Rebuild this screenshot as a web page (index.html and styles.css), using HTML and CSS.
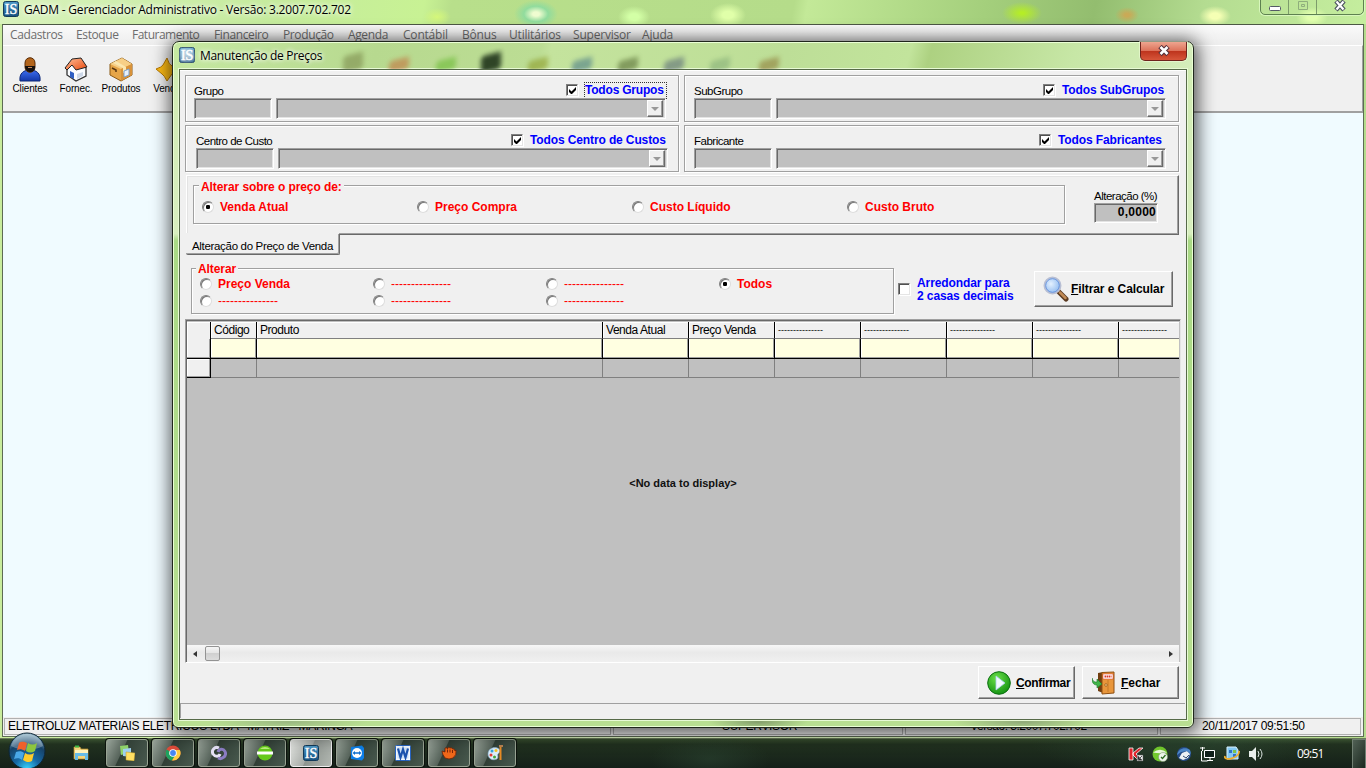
FILE: index.html
```html
<!DOCTYPE html>
<html lang="pt-BR">
<head>
<meta charset="utf-8">
<title>GADM - Gerenciador Administrativo</title>
<link rel="stylesheet" href="styles.css">
</head>
<body>
<svg width="0" height="0" class="defs">
  <defs>
    <linearGradient id="gBlue" x1="0" y1="0" x2="0" y2="1"><stop offset="0" stop-color="#4d9ac9"/><stop offset="1" stop-color="#17517f"/></linearGradient>
    <linearGradient id="gShirt" x1="0" y1="0" x2="0" y2="1"><stop offset="0" stop-color="#3d6ff0"/><stop offset="1" stop-color="#1337a8"/></linearGradient>
    <linearGradient id="gRoof" x1="0" y1="0" x2="1" y2="1"><stop offset="0" stop-color="#ffc09a"/><stop offset="1" stop-color="#e84a10"/></linearGradient>
    <radialGradient id="gGreen" cx=".4" cy=".3" r=".8"><stop offset="0" stop-color="#6be04a"/><stop offset="1" stop-color="#0a8a0c"/></radialGradient>
    <radialGradient id="gLens" cx=".4" cy=".4" r=".7"><stop offset="0" stop-color="#e4f1ff"/><stop offset="1" stop-color="#86b4ee"/></radialGradient>
    <radialGradient id="gOrb" cx=".5" cy="1" r="1"><stop offset="0" stop-color="#37d6ff"/><stop offset=".35" stop-color="#1769a5"/><stop offset=".7" stop-color="#164268"/><stop offset="1" stop-color="#9cc0d0"/></radialGradient>
    <symbol id="is" viewBox="0 0 16 16"><rect x=".5" y=".5" width="15" height="15" rx="2" fill="url(#gBlue)" stroke="#123a59"/><text x="8" y="13" text-anchor="middle" font-family="Liberation Serif, serif" font-size="15" textLength="12.500" lengthAdjust="spacingAndGlyphs" fill="#fff" stroke="#fff" stroke-width=".4">IS</text></symbol>
    <symbol id="tick" viewBox="0 0 9 9"><path d="M1 3v3l2 2h1l4-4V1L3.500 5.500z" fill="#000"/></symbol>
  </defs>
</svg>
<div class="screen">
  <div class="app">
    <div class="app-title">
      <svg class="ic16"><use href="#is"/></svg>
      <span class="app-caption">GADM - Gerenciador Administrativo - Versão: 3.2007.702.702</span>
      <div class="win-buttons">
        <span class="wb"><svg width="14" height="14"><rect x="1.500" y="6.500" width="11" height="4" rx="1" fill="#fff" stroke="#555a66"/></svg></span>
        <span class="wb"><svg width="14" height="14"><path d="M2.500 1.500h9v8h-9zM5.500 4.500h3v2h-3z" fill="none" stroke="#8fae7c"/></svg></span>
        <span class="wb wide"><svg width="14" height="14"><path d="M3 1l8 9M11 1l-8 9" stroke="#4c5260" stroke-width="4.500"/><path d="M3.500 1.500l7 8M10.500 1.500l-7 8" stroke="#fff" stroke-width="2.200"/></svg></span>
      </div>
    </div>
    <div class="app-frame">
      <div class="menubar"><span>Cadastros</span><span>Estoque</span><span>Faturamento</span><span>Financeiro</span><span>Produção</span><span>Agenda</span><span>Contábil</span><span>Bônus</span><span>Utilitários</span><span>Supervisor</span><span>Ajuda</span></div>
      <div class="toolbar">
        <div class="tool"><svg width="24" height="25" viewBox="0 0 24 25"><path d="M2 24c-1-8 4-11 10-11s11 3 10 11z" fill="url(#gShirt)" stroke="#0d2878"/><path d="M7 6c0-7 10-7 10 0v4c0 7-10 7-10 0z" fill="#b3651c" stroke="#5a2d08"/><path d="M7 9h10c1 8-10 8-10 0z" fill="#16110e"/><path d="M10 10h4v1h-4z" fill="#c98b5c"/></svg><span>Clientes</span></div>
        <div class="tool"><svg width="24" height="25" viewBox="0 0 24 25"><path d="M3 11l9-8 10 8v8l-10 5-9-6z" fill="#fafcff" stroke="#333" stroke-width="1.300"/><path d="M1 11L8 2l9-1 6 9-11 3-4-5-5 5z" fill="url(#gRoof)" stroke="#222"/><path d="M6 14l4 2v6l-4-2z" fill="#2f5fc4"/><path d="M13 17l6-2v4l-6 3z" fill="#cdd8e8"/></svg><span>Fornec.</span></div>
        <div class="tool"><svg width="24" height="25" viewBox="0 0 24 25"><path d="M1 7l12-6 10 6v11l-11 6-11-6z" fill="#e6a548" stroke="#8b5a17"/><path d="M1 7l12-6 10 6-11 5z" fill="#f7cf86"/><path d="M12 12v12l11-6V7z" fill="#d8923a"/><path d="M7 4l10 6v5l-3 1v-5L4 6z" fill="#fbe6ae"/><path d="M15 14l5-2v6l-5 2z" fill="#e9f0fa" stroke="#7aa0d0"/><path d="M3 11l4 2v2" fill="none" stroke="#5a3710" stroke-width="1.500"/></svg><span>Produtos</span></div>
        <div class="tool"><svg width="24" height="25" viewBox="0 0 24 25"><path d="M12 1q2 7 5 8l7 3q-6 3-7 5l-5 7q-3-6-5-7l-6-5q6-2 7-4z" fill="#fdbb14" stroke="#b87900" stroke-linejoin="round"/></svg><span>Venda</span></div>
      </div>
      <div class="workspace"></div>
      <div class="app-status"><span>ELETROLUZ MATERIAIS ELETRICOS LTDA - MATRIZ - MARINGA</span><span class="mid">SUPERVISOR</span><span class="mid ver">Versão: 3.2007.702.702</span><span class="date">20/11/2017 09:51:50</span></div>
    </div>
  </div>

  <div class="taskbar">
    <svg class="orb" width="40" height="37" viewBox="0 0 40 37"><circle cx="20" cy="19" r="18" fill="url(#gOrb)" stroke="#0d2535"/><path d="M4 14C9-2 31-2 36 14c-9 5-22 5-32 0z" fill="#fff" opacity=".27"/><path d="M12 11c3-2 5-1 8 0l-2 8c-3-2-5-2-8-1z" fill="#f0602c"/><path d="M21 11c3 2 6 2 9 0l-2 8c-3 2-6 2-9 0z" fill="#8dc63e"/><path d="M9 20c3-1 6-1 8 1l-2 7c-2-2-5-2-8-1z" fill="#4aa8e8"/><path d="M18 21c3 2 6 2 9 0l-2 8c-3 2-6 1-9-1z" fill="#ffcb2b"/></svg>
    <div class="tasks">
      <span class="task bare"><svg class="ic16"><path d="M1 2h6l1 2h7v10H1z" fill="#f5d57c" stroke="#b99335" stroke-width=".7"/><path d="M2 5h13v4H2z" fill="#fff2ba"/><path d="M2 8h13v7h-3v-4H5v4H2z" fill="#67bce8"/><path d="M2 1.500h4" stroke="#3fb944" stroke-width="2"/></svg></span>
      <span class="task"><svg class="ic16"><path d="M1 1l8-1 1 8-8 2z" fill="#8fd36a"/><path d="M4 4l8-1v9l-8-1z" fill="#9ed0ef"/><path d="M7 7l9 1-1 8-8-1z" fill="#ffdf62" stroke="#b5952c" stroke-width=".5"/></svg></span>
      <span class="task"><svg class="ic16"><circle cx="8" cy="8" r="7.500" fill="#dd4b39"/><path d="M8 8L1.500 4.500A7.500 7.500 0 0 0 7 15.500l4-6z" fill="#1da25e"/><path d="M8 5h6.900A7.500 7.500 0 0 1 7 15.500L11 9z" fill="#ffcd41"/><circle cx="8" cy="8" r="3.800" fill="#fff"/><circle cx="8" cy="8" r="2.900" fill="#4687f4"/></svg></span>
      <span class="task"><svg class="ic16"><path d="M8 3C4 1 0 5 2 9c2 3 6 3 7 0" fill="none" stroke="#e6e2f7" stroke-width="3"/><path d="M7 13c4 2 9-2 7-6.500C12 3 8 4 7 7" fill="none" stroke="#8c7dc4" stroke-width="3"/></svg></span>
      <span class="task"><svg class="ic16"><circle cx="8" cy="8" r="7.500" fill="#65c91c"/><path d="M3 4a7 7 0 0 1 10 0z" fill="#b9ef7b"/><path d="M0 6.500h16v3H0z" fill="#fff"/></svg></span>
      <span class="task active"><svg class="ic16"><use href="#is"/></svg></span>
      <span class="task"><svg class="ic16"><path d="M2 2l11-1.500L15 3v10l-2 2.500L2 14z" fill="#0d7fe8"/><circle cx="8" cy="8" r="5" fill="#fff"/><path d="M3.500 8L6 6v1.200h4V6l2.500 2L10 10V8.800H6V10z" fill="#0d6fd0"/></svg></span>
      <span class="task"><svg class="ic16"><rect x=".5" y=".5" width="15" height="15" rx="1" fill="#f4f9ff" stroke="#2864c0"/><rect x="2.500" y="2.500" width="11" height="11" fill="#cde0f6"/><path d="M3 3.500l2.500 9 2.500-8 2.500 8 2.500-9" fill="none" stroke="#1b52ae" stroke-width="2.200"/></svg></span>
      <span class="task"><svg class="ic16"><path d="M1 6l3 1 0-4q2-1 2.500 1Q7 1 9 3q2-1 2.500 1 2-1 2.500 2l1-1q1 5-3 8l-4 1-4-1Q1 9 1 6z" fill="#f0681a" stroke="#6f2207" stroke-width=".8"/><path d="M6.500 4.500v3M9 4.500v3M11.500 5v3" stroke="#7d2408"/></svg></span>
      <span class="task"><svg class="ic16"><path d="M1 9C1 3 8 1 12 4c2 2 0 4-1 5s1 3-1 5C6 16 1 14 1 9z" fill="#dbeefa" stroke="#7fa8c8" stroke-width=".6"/><circle cx="5" cy="6" r="1.500" fill="#35a3e0"/><circle cx="9" cy="5.500" r="1.500" fill="#f3c327"/><circle cx="4" cy="10" r="1.500" fill="#e23b35"/><circle cx="7.500" cy="12" r="1.500" fill="#42a63a"/><path d="M13.500 1v14" stroke="#e88b24" stroke-width="2"/><path d="M12 1h4" stroke="#b98454" stroke-width="2"/></svg></span>
    </div>
    <div class="tray">
      <svg class="ic16"><path d="M1 2h4v12H1zM5 7l6-5h4l-7 6 7 6h-5L5 9z" fill="#e3262d" stroke="#fff" stroke-width=".8"/><path d="M9 9h6v6H9z" fill="#ececec" stroke="#555" stroke-width=".5"/><path d="M10 14l4-4M10 10v4h4" stroke="#555"/></svg>
      <svg class="ic16"><circle cx="8" cy="8" r="7.500" fill="#72c92d"/><path d="M1 6.500Q8 1 15 6.500 8 8 1 6.500z" fill="#e8f9d8"/><circle cx="11" cy="11" r="4.500" fill="#edf5ea" stroke="#809870" stroke-width=".6"/><path d="M9 11l1.500 1.500L13.500 9" fill="none" stroke="#2d6b20" stroke-width="1.300"/></svg>
      <svg class="ic16"><circle cx="8" cy="8" r="7" fill="#264c88"/><path d="M3 12l3-5 5-2 3 3-2 4-5 2z" fill="#eef1f5"/><path d="M1 9C2 3 9 0 14 4l1 4-4-3-6 1z" fill="#4c87ca"/><path d="M7 10l3 2 3-3" fill="none" stroke="#334b70"/></svg>
      <svg class="ic16"><path d="M4.500 4.500h10v7h-10z" fill="#10201a" stroke="#fff"/><path d="M2.500 1v4M0 2h5M1.500 5v10h6M7 14.500h6M10 12v2" fill="none" stroke="#fff"/></svg>
      <svg class="ic16"><path d="M3 1h9l2 3v9H3z" fill="#84c9f3" stroke="#d9f2ff"/><path d="M5 4h3v3H5zM9 8h3v3H9z" fill="#2d72cb"/><path d="M9 4h3v3H9z" fill="#7bc44b"/><path d="M1 10C-1 16 16 12 15 5" fill="none" stroke="#eeae2e" stroke-width="1.800"/></svg>
      <svg class="ic16"><path d="M1 5h3l4-4v14l-4-4H1z" fill="#e9efec"/><path d="M10 5q2 3 0 6M12 3q4 5 0 10" fill="none" stroke="#dce5e1"/></svg>
    </div>
    <span class="clock">09:51</span>
    <span class="show-desktop"></span>
  </div>

  <div class="dialog">
    <div class="dlg-title">
      <svg class="ic16"><use href="#is"/></svg>
      <span>Manutenção de Preços</span>
      <div class="blobs"><i class="b1"></i><i class="b2"></i><i class="b3"></i><i class="b4"></i><i class="b5"></i><i class="b6"></i><i class="b7"></i><i class="b8"></i><i class="b9"></i><i class="b10"></i></div>
      <div class="dlg-close"><svg width="14" height="12"><path d="M3 1.500l8 8M11 1.500l-8 8" stroke="#53303a" stroke-width="4.800"/><path d="M3.500 2l7 7M10.500 2l-7 7" stroke="#fff" stroke-width="2.600"/></svg></div>
    </div>
    <div class="client">
      <div class="filters">
        <div class="fbox">
          <div class="fhead"><span class="lbl">Grupo</span><span class="chk"><svg width="9" height="9"><use href="#tick"/></svg></span><span class="bold blue focus w80">Todos Grupos</span></div>
          <div class="frow"><div class="field code"></div><div class="field combo"><span class="drop"></span></div></div>
        </div>
        <div class="fbox right">
          <div class="fhead"><span class="lbl">SubGrupo</span><span class="chk"><svg width="9" height="9"><use href="#tick"/></svg></span><span class="bold blue w101">Todos SubGrupos</span></div>
          <div class="frow"><div class="field code"></div><div class="field combo"><span class="drop"></span></div></div>
        </div>
        <div class="fbox second">
          <div class="fhead"><span class="lbl">Centro de Custo</span><span class="chk"><svg width="9" height="9"><use href="#tick"/></svg></span><span class="bold blue w136">Todos Centro de Custos</span></div>
          <div class="frow"><div class="field code"></div><div class="field combo"><span class="drop"></span></div></div>
        </div>
        <div class="fbox right">
          <div class="fhead"><span class="lbl">Fabricante</span><span class="chk"><svg width="9" height="9"><use href="#tick"/></svg></span><span class="bold blue w105">Todos Fabricantes</span></div>
          <div class="frow"><div class="field code"></div><div class="field combo"><span class="drop"></span></div></div>
        </div>
      </div>

      <div class="page">
        <div class="group base">
          <span class="legend bold red">Alterar sobre o preço de:</span>
          <span class="opt"><i class="radio on"></i><b>Venda Atual</b></span><span class="opt"><i class="radio"></i><b>Preço Compra</b></span><span class="opt"><i class="radio"></i><b>Custo Líquido</b></span><span class="opt"><i class="radio"></i><b>Custo Bruto</b></span>
        </div>
        <div class="percent"><span class="lbl">Alteração (%)</span><div class="field bold value">0,0000</div></div>
      </div>
      <div class="tab lbl">Alteração do Preço de Venda</div>

      <div class="options">
        <div class="group change">
          <span class="legend bold red">Alterar</span>
          <span class="opt"><i class="radio"></i><b>Preço Venda</b></span><span class="opt"><i class="radio"></i><span>---------------</span></span><span class="opt"><i class="radio"></i><span>---------------</span></span><span class="opt"><i class="radio on"></i><b>Todos</b></span>
          <span class="opt"><i class="radio"></i><span>---------------</span></span><span class="opt"><i class="radio"></i><span>---------------</span></span><span class="opt"><i class="radio"></i><span>---------------</span></span>
        </div>
        <span class="chk round"></span>
        <div class="bold blue round-text">Arredondar para<br>2 casas decimais</div>
        <div class="button filter"><svg width="26" height="26" viewBox="0 0 26 26"><path d="M15 15l8 8" stroke="#5b3a20" stroke-width="5" stroke-linecap="round"/><path d="M17 16.500l5.500 5.500" stroke="#c08a55" stroke-width="2.500" stroke-linecap="round"/><circle cx="9.500" cy="9.500" r="8" fill="url(#gLens)" stroke="#b8bfd4" stroke-width="2"/><circle cx="9.500" cy="9.500" r="6.800" fill="none" stroke="#5a8adc" stroke-width=".8"/></svg><span><u>F</u>iltrar e Calcular</span></div>
      </div>

      <div class="grid">
        <div class="cells head"><span class="ind"></span><span>Código</span><span>Produto</span><span>Venda Atual</span><span>Preço Venda</span><span class="dash">---------------</span><span class="dash">---------------</span><span class="dash">---------------</span><span class="dash">---------------</span><span class="dash">---------------</span></div>
        <div class="cells search"><span class="ind"></span><span></span><span></span><span></span><span></span><span></span><span></span><span></span><span></span><span></span></div>
        <div class="cells data"><span class="ind"></span><span></span><span></span><span></span><span></span><span></span><span></span><span></span><span></span><span></span></div>
        <div class="nodata">&lt;No data to display&gt;</div>
        <div class="scroll"><i class="arrow left"></i><i class="thumb"></i><i class="arrow rightward"></i></div>
      </div>

      <div class="actions">
        <div class="button"><svg width="24" height="24" viewBox="0 0 24 24"><circle cx="12" cy="12" r="11.300" fill="url(#gGreen)" stroke="#0b6e10"/><path d="M9 5l9 7-9 7z" fill="#f2faff" stroke="#a9cdf0" stroke-width=".8"/></svg><span><u>C</u>onfirmar</span></div>
        <div class="button exit"><svg width="24" height="24" viewBox="0 0 24 24"><path d="M6 2l5-1v21l-5-2z" fill="#703e10"/><path d="M10 1.500l12-.5v21l-12 1z" fill="#e8963b" stroke="#8e4f12"/><path d="M16 9v12" stroke="#c47a28"/><circle cx="14" cy="14" r="1.300" fill="#fbd58c" stroke="#8e4f12" stroke-width=".7"/><path d="M11 3h10v5H11z" fill="#fff" stroke="#d9362b" stroke-width=".5"/><path d="M12.500 5.500h7" stroke="#d9362b" stroke-width="2" stroke-dasharray="1.500 .5"/><path d="M0 7c1 4 3 4 5 4V8l5 5-5 4v-3C1 14 0 11 0 7z" fill="#42b449" stroke="#187426" stroke-width=".6"/></svg><span><u>F</u>echar</span></div>
      </div>
      <div class="dlg-status"></div>
    </div>
  </div>
</div>
</body>
</html>
```
FILE: styles.css
```css
* { box-sizing: border-box; }
body { margin: 0; width: 1366px; height: 768px; overflow: hidden; font: 12px/14px "Liberation Sans", sans-serif; color: #000; }
.defs { position: absolute; }
.screen { position: relative; width: 1366px; height: 768px; overflow: hidden; display: flex; flex-direction: column; }
.ic16 { width: 16px; height: 16px; flex: none; }
svg { display: block; }
.app { height: 738px; flex: none; display: flex; flex-direction: column; padding: 0 2px 1px;
  background: linear-gradient(90deg, #c8ec9c, #e7ffcb 50%, #b4dc8c); }
.app-title { height: 24px; margin: 0 -2px; padding: 1px 2px 0 3px; display: flex; flex: none; position: relative;
  background:
    radial-gradient(ellipse 14px 9px at 437px 17px, #d5f77a, transparent),
    radial-gradient(ellipse 22px 14px at 536px 14px, #effcd0 0 15%, #87dba2cc 55%, transparent),
    radial-gradient(ellipse 16px 11px at 634px 17px, #d3ffa6 30%, transparent),
    radial-gradient(ellipse 18px 12px at 728px 15px, #e0ffa9 30%, transparent),
    radial-gradient(ellipse 20px 11px at 1022px 13px, #b5ed26 10%, transparent),
    radial-gradient(ellipse 12px 8px at 1127px 15px, #c9aa57 20%, transparent),
    radial-gradient(ellipse 16px 10px at 1215px 16px, #f5ffb4 30%, transparent),
    radial-gradient(ellipse 16px 10px at 1312px 17px, #e1ffad 30%, transparent),
    linear-gradient(100deg, #d9f2bd 0, #c5eb9d 20%, #c8f294 31%, #b8df8b 33%, #b5dc8a 58%, #c3e998 59%, #a4cf7c 72%, #93bd6f 80%, #b4dc91 88%, #c5ee9e); }
.app-caption { font: 12px/17px "Open Sans", sans-serif; margin-left: 5px; letter-spacing: -.22px; text-shadow: 0 0 6px #fff, 0 0 4px #fff; white-space: nowrap; }
.win-buttons { margin: -2px 0 0 auto; display: flex; height: 16px; border: 1px solid #5e8150; border-radius: 0 0 5px 5px; box-shadow: 0 0 0 1px #d8f7bd; }
.wb { width: 28px; display: flex; justify-content: center; border-right: 1px solid #7d9c6b; }
.wb.wide { width: 46px; border: 0; }
.app-frame { flex: 1; min-height: 0; display: flex; flex-direction: column; border: 1px solid #5d6b54; border-top-color: #4c5844; }
.menubar { height: 20px; flex: none; background: linear-gradient(#fafafa, #ededed); padding: 3px 0 0 7px; display: grid;
  grid-template-columns: 66px 56px 82px 69px 65px 55px 59px 47px 64px 69px 60px; font: 12px/14px "Open Sans", sans-serif; letter-spacing: -.38px; color: #6d6d6d; }
.menubar span:nth-child(3) { letter-spacing: -.5px; }
.menubar span:nth-child(n+7) { letter-spacing: -.2px; }
.toolbar { height: 68px; flex: none; border-top: 1px solid #fff; border-bottom: 2px solid #a0a0a0; border-right: 1px solid #a0a0a0; background: #f0f0f0; display: flex; padding: 11px 0 0 4px; }
.tool { width: 46px; display: flex; flex-direction: column; align-items: center; gap: 1px; font: 10px/12px "Liberation Sans", sans-serif; letter-spacing: -.15px; flex: none; }
.tool:nth-child(n+3) { margin-left: -1px; margin-right: 1px; }
.workspace { flex: 1; background: #f0fbff; }
.app-status { height: 19px; flex: none; background: #f0f0f0; padding: 1px 2px 1px 1px; display: grid; grid-template-columns: 607px 290px 253px 1fr; gap: 2px; letter-spacing: -.35px; line-height: 15px; white-space: nowrap; }
.app-status span { border: 1px solid #b0b0b0; padding-left: 3px; overflow: hidden; }
.app-status .mid { text-align: center; }
.app-status .ver { padding-right: 9px; letter-spacing: -.5px; }
.app-status .date { padding-left: 41px; }

.taskbar { height: 30px; flex: none; display: flex; align-items: stretch; position: relative; border-top: 1px solid #6a7a5c; padding-left: 60px;
  background: radial-gradient(ellipse 60px 25px at 710px 20px, #2c463480, transparent), radial-gradient(ellipse 150px 40px at 1180px 0, #31533c80, transparent), linear-gradient(#38502f 0, #21311f 18%, #152019 100%); }
.orb { position: absolute; left: 7px; top: -7px; }
.tasks { display: flex; gap: 4px; }
.task { width: 42px; height: 28px; border: 1px solid #98a393; border-radius: 3px; display: flex; align-items: center; justify-content: center; box-shadow: 0 0 0 1px #0c130d;
  background: linear-gradient(115deg, #98a399 0, #56635a 38%, #313f36 40%, #48594e); }
.task.active { background: linear-gradient(115deg, #e2e4e0, #a8aca8 45%, #8e948f 47%, #b1b7b1); border-color: #eee; }
.task.bare { background: none; border: 0; box-shadow: none; }
.tray { margin-left: auto; display: flex; gap: 8px; padding-top: 7px; }
.clock { color: #fff; font: 12px/30px "Open Sans", sans-serif; letter-spacing: -.8px; margin-left: 33px; width: 55px; }
.show-desktop { width: 14px; border: 1px solid #718073; border-bottom: 0; background: linear-gradient(120deg, #516155, #1b281f); }

.dialog { position: absolute; left: 172px; top: 41px; width: 1022px; height: 687px; border: 1px solid #20261c; border-radius: 7px 7px 6px 6px; padding: 0 6px 7px;
  display: flex; flex-direction: column; overflow: visible; box-shadow: inset 0 0 0 1px #eaffd5, 1px 2px 18px 3px #000000a8;
  background:
    radial-gradient(ellipse 50px 8px at 585px 680px, #839e6b, transparent),
    radial-gradient(ellipse 70px 8px at 850px 680px, #8fa978, transparent),
    radial-gradient(ellipse 80px 8px at 115px 680px, #9ab781, transparent),
    linear-gradient(105deg, #c6e9a2 0, #b7d98f 20%, #bcdd94 36%, #c4e39d 37%, #bdde97 60%, #c2e49c 72%, #add181 74%, #c7e7a6 88%, #d5edbb 100%) 0 0 / 100% 28px no-repeat,
    linear-gradient(#cfebb0, #d8eebf 28%, #a9d985 29%, #b9df92); }
.dlg-title { height: 27px; flex: none; display: flex; align-items: flex-start; padding-top: 5px; position: relative; font: 12px/17px "Open Sans", sans-serif; letter-spacing: -.3px; text-shadow: 0 0 5px #fff, 0 0 5px #fff; gap: 5px; }
.dlg-close { position: absolute; right: 0; top: 0; width: 47px; height: 19px; border: 1px solid #6f241d; border-top: 0; border-radius: 0 0 5px 5px; box-shadow: 0 0 0 1px #f4ffdf88; padding: 3px 16px;
  background: linear-gradient(#eea58f, #dd735b 48%, #bd331c 50%, #d7563a); }
.blobs { position: absolute; left: 0; right: 0; top: 0; bottom: 0; overflow: hidden; }
.blobs i { position: absolute; bottom: -2px; width: 20px; height: 12px; filter: blur(2.500px); opacity: .6; transform: skewY(-15deg); border-radius: 3px; }
.blobs .b1 { left: 164px; background: #7d8c4d; height: 17px; }
.blobs .b2 { left: 210px; background: #c4723d; }
.blobs .b3 { left: 257px; background: #6bbb35; }
.blobs .b4 { left: 302px; background: #20341b; height: 17px; opacity: .9; }
.blobs .b5 { left: 349px; background: #8c9c28; }
.blobs .b6 { left: 393px; background: #4b7c87; }
.blobs .b7 { left: 439px; background: #586e35; }
.blobs .b8 { left: 485px; background: #5c6c78; }
.blobs .b9 { left: 531px; background: #86af78; }
.blobs .b10 { left: 580px; background: #8f7c39; }

.client { flex: 1; min-height: 0; background: #f0f0f0; border: 1px solid #566a48; outline: 1px solid #e8fad5; outline-offset: 0; display: flex; flex-direction: column; padding: 5px 0 0 5px; box-shadow: inset 0 1px #fff; }
.lbl { font-size: 11.500px; letter-spacing: -.5px; white-space: nowrap; }
.bold { font-weight: bold; white-space: nowrap; }
.blue { color: #00f; }
.red { color: #f00; }
.filters { display: grid; grid-template-columns: 494px 495px; grid-template-rows: 47px 47px; gap: 3px 5px; flex: none; }
.fbox, .group { border: 1px solid #a0a0a0; box-shadow: 1px 1px #fff, inset 1px 1px #fff; }
.fbox { padding-left: 8px; }
.fbox.right { padding-left: 9px; }
.fbox.second { padding-left: 10px; }
.fhead { height: 22px; width: 472px; display: flex; align-items: center; }
.second .fhead { width: 471px; }
.right .fhead { width: 470px; }
.fhead .lbl { flex: 1; padding-top: 8px; }
.fhead .bold { margin-left: 7px; padding-top: 6px; letter-spacing: -.12px; }
.fhead .focus { outline: 1px dotted #333; height: 15px; padding-top: 0; margin-top: 6px; letter-spacing: -.2px; }
.w80 { width: 81px; } .w101 { width: 102px; } .w105 { width: 106px; } .w136 { width: 137px; }
.chk { width: 12px; height: 12px; flex: none; background: #fff; border: 1px solid #808080; border-right-color: #e5e5e5; border-bottom-color: #e5e5e5; box-shadow: inset 1px 1px #505050, 1px 1px #fff; padding: 1px; }
.fhead .chk { margin-top: 6px; }
.frow { display: flex; gap: 4px; }
.field { height: 21px; background: #c0c0c0; border: 1px solid #a0a0a0; border-right-color: #fff; border-bottom-color: #fff; box-shadow: inset 1px 1px #696969, inset -1px -1px #e3e3e3; }
.field.code { width: 78px; }
.field.combo { width: 390px; padding: 1px 2px; display: flex; justify-content: flex-end; }
.drop { width: 16px; height: 17px; background: #f0f0f0; border: 1px solid #fff; border-right-color: #696969; border-bottom-color: #696969; box-shadow: inset -1px -1px #a0a0a0; display: flex; justify-content: center; align-items: center; }
.drop::after { content: ""; border: 4px solid transparent; border-top-color: #999; border-bottom: 0; margin-top: 1px; }

.page { height: 60px; margin: 3px 0 0 1px; width: 993px; flex: none; border: solid; border-width: 1px 1px 1px 1px; border-color: #fff #696969 #696969 #fff; box-shadow: inset -1px -1px #a0a0a0, inset 1px 1px #e3e3e3; display: flex; padding: 9px 0 0 6px; }
.group { position: relative; flex: none; }
.legend { position: absolute; left: 5px; top: -6px; padding: 0 2px; background: #f0f0f0; line-height: 14px; letter-spacing: -.08px; }
.change .legend { top: -7px; left: 4px; }
.base { width: 872px; height: 39px; display: grid; grid-template-columns: repeat(4, 215px); padding: 14px 0 0 8px; }
.opt { display: flex; gap: 5px; height: 14px; color: #f00; white-space: nowrap; align-items: center; }
.radio { width: 12px; height: 12px; border-radius: 50%; border: 1px solid; border-color: #808080 #ddd #ddd #808080; background: #fff; box-shadow: inset 1px 1px #777; flex: none; margin-right: 1px; }
.radio.on { background: radial-gradient(circle at 5px 5px, #000 0 2px, #fff 2.400px); }
.percent { margin: 4px 0 0 29px; width: 64px; }
.percent .lbl { display: block; height: 14px; letter-spacing: -.5px; }
.value { height: 20px; text-align: right; padding: 1px 1px 0 0; letter-spacing: .25px; }
.tab { width: 154px; height: 21px; margin: -1px 0 0 1px; background: #f0f0f0; position: relative; border: solid #696969; border-width: 0 1px 1px 0; border-radius: 0 0 2px 2px; box-shadow: inset -1px -1px #a0a0a0, -1px -1px #f0f0f0; padding: 5px 0 0 6px; flex: none; letter-spacing: -.32px; }
.options { display: flex; margin-top: 13px; padding-left: 6px; height: 51px; flex: none; }
.change { width: 703px; height: 46px; display: grid; grid-template-columns: repeat(4, 173px); grid-template-rows: 17px 17px; padding: 8px 0 0 8px; }
.round { margin: 15px 0 0 4px; width: 12px; }
.round-text { margin: 9px 0 0 7px; line-height: 13px; width: 117px; letter-spacing: -.1px; }
.button { font-weight: bold; background: #f0f0f0; border: 1px solid #fff; border-right-color: #696969; border-bottom-color: #696969; box-shadow: inset -1px -1px #a0a0a0; display: flex; align-items: center; white-space: nowrap; }
.filter { width: 139px; height: 36px; margin-top: 3px; padding-left: 8px; gap: 2px; letter-spacing: -.08px; }

.grid { width: 996px; height: 344px; flex: none; border: 1px solid #a0a0a0; border-right-color: #e3e3e3; border-bottom-color: #fff; box-shadow: inset 1px 1px #696969; background: #c0c0c0; padding: 2px 1px 0 1px; display: flex; flex-direction: column; }
.cells { display: grid; grid-template-columns: 24px 46px 346px repeat(6, 86px) 61px; grid-template-rows: 100%; flex: none; overflow: hidden; }
.cells span { border-right: 1px solid #000; letter-spacing: -.45px; white-space: nowrap; }
.cells span:last-child { border-right: 0; }
.head { height: 17px; line-height: 17px; background: #f0f0f0; }
.head span { padding-left: 3px; border-bottom: 1px solid #808080; box-shadow: inset 1px 1px #fff; }
.head .ind { border-bottom: 0; }
.head .dash { font-size: 9px; letter-spacing: 0; }
.search { height: 20px; border-bottom: 1px solid #000; background: #ffffe1; }
.search span { box-shadow: inset -1px -1px #a0a0a0, inset 1px 0 #fff; }
.search .ind, .data .ind { background: #f0f0f0; }
.data { height: 19px; }
.data span { border-right-color: #808080; border-bottom: 1px solid #808080; }
.data .ind { border-color: #000; box-shadow: inset -1px -1px #a0a0a0, inset 1px 1px #fff; }
.nodata { flex: 1; display: flex; align-items: center; justify-content: center; font: bold 11px/14px "Liberation Sans", sans-serif; padding-bottom: 57px; color: #111; }
.scroll { height: 17px; background: linear-gradient(#f7f7f7, #e9e9e9 45%, #f0f0f0); display: flex; align-items: center; padding: 0 6px 0 6px; flex: none; }
.arrow { border: 3px solid transparent; }
.arrow.left { border-right: 4px solid #333; border-left: 0; }
.arrow.rightward { border-left: 4px solid #333; border-right: 0; margin-left: auto; }
.thumb { width: 15px; height: 15px; margin-left: 8px; border: 1px solid #939393; border-radius: 2px; background: linear-gradient(#f5f5f5, #e4e4e4 48%, #d0d0d0 50%, #dcdcdc); }
.actions { height: 33px; margin-top: 3px; display: flex; justify-content: flex-end; gap: 7px; padding-right: 7px; flex: none; }
.actions .button { width: 97px; padding-left: 8px; gap: 5px; letter-spacing: -.35px; }
.actions .exit { padding-left: 9px; letter-spacing: 0; }
.dlg-status { margin: 4px 1px 1px -5px; flex: 1; border: solid #a0a0a0; border-width: 1px 0 0 1px; }
```
